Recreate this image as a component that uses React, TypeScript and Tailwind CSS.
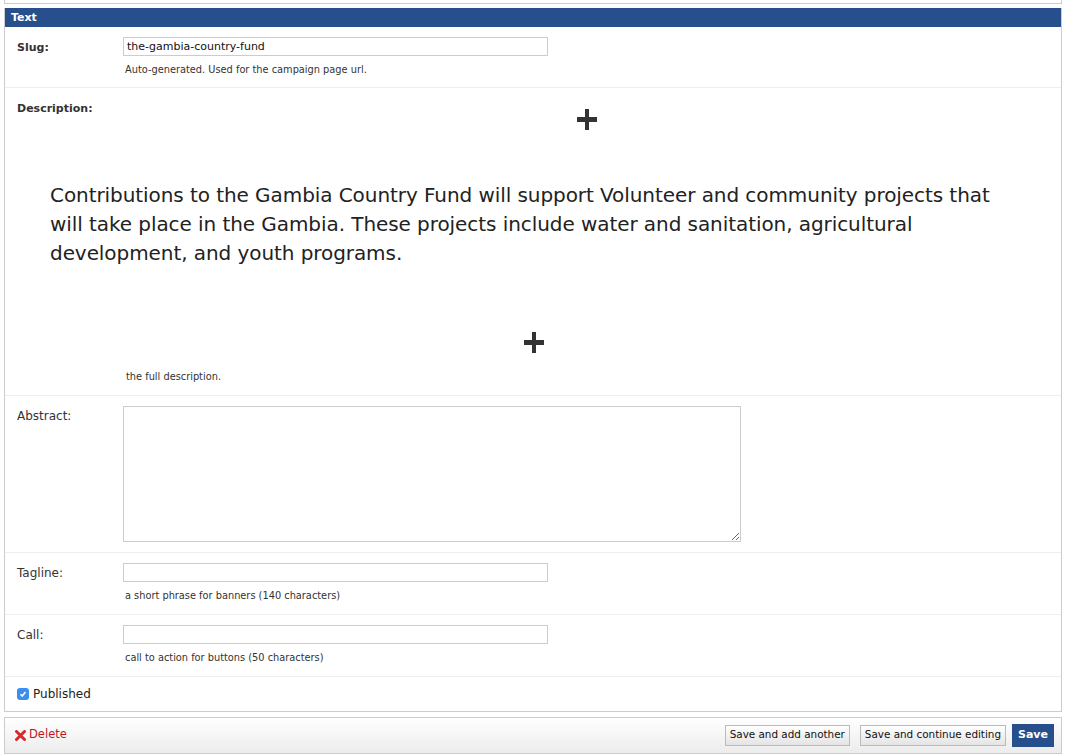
import React from 'react';

const font = { fontFamily: '"DejaVu Sans", Verdana, sans-serif' };

function Plus() {
  return (
    <svg width="20" height="21" viewBox="0 0 20 21" className="block">
      <rect x="8" y="0" width="4" height="21" fill="#333" />
      <rect x="0" y="8" width="20" height="5" fill="#333" />
    </svg>
  );
}

function Row({
  label,
  bold,
  children,
}: {
  label: string;
  bold?: boolean;
  children: React.ReactNode;
}) {
  return (
    <div className={`flex border-b border-[#eee] pl-[12px] pt-[10px] ${bold ? 'pb-[11px]' : 'pb-[12px]'}`}>
      <div
        className={`w-[106px] shrink-0 text-[#333] ${bold ? 'pt-[3px] text-[11px] font-bold' : 'pt-[1px] text-[12px]'}`}
      >
        {label}
      </div>
      <div className="flex-1">{children}</div>
    </div>
  );
}

function Help({ children }: { children: React.ReactNode }) {
  return <p className="mt-[8px] pl-[2px] text-[9.8px] leading-[12px] text-[#333]">{children}</p>;
}

const inputClass =
  'block h-[19px] w-[425px] border border-[#ccc] bg-white px-[3px] text-[11px] text-[#111] outline-none';

const btnClass =
  'h-[21px] border border-[#bbb] bg-gradient-to-b from-white to-[#e4e4e4] px-[4px] text-[10.4px] text-[#111]';

export default function App() {
  return (
    <div className="min-h-[754px] w-[1069px] bg-white" style={font}>
      {/* tail of the previous fieldset */}
      <div className="ml-[4px] mr-[7px] h-[4px] border-x border-b border-[#ccc]" />

      {/* Text fieldset */}
      <div className="ml-[4px] mr-[7px] mt-[4px] border border-t-0 border-[#ccc]">
        <div className="h-[19px] bg-[#264f8b] pl-[6px] text-[11px] font-bold leading-[19px] text-white">
          Text
        </div>

        <Row label="Slug:" bold>
          <input className={inputClass} defaultValue="the-gambia-country-fund" />
          <Help>Auto-generated. Used for the campaign page url.</Help>
        </Row>

        {/* Description */}
        <div className="border-b border-[#eee] pb-[12px] pt-[13px]">
          <div className="pl-[12px] text-[11px] font-bold text-[#333]">Description:</div>
          <div className="-mt-[9px] pl-[572px]">
            <Plus />
          </div>
          <div className="mt-[51px] pl-[45px] text-[20px] leading-[29px] tracking-[-0.07px] text-[#222]">
            Contributions to the Gambia Country Fund will support Volunteer and community projects that
            <br />
            will take place in the Gambia. These projects include water and sanitation, agricultural
            <br />
            development, and youth programs.
          </div>
          <div className="mt-[64px] pl-[519px]">
            <Plus />
          </div>
          <p className="mt-[18px] pl-[121px] text-[9.8px] leading-[12px] text-[#333]">the full description.</p>
        </div>

        {/* Abstract */}
        <div className="flex border-b border-[#eee] pl-[12px] pt-[10px] pb-[10px]">
          <div className="w-[106px] shrink-0 pt-[1px] text-[12px] text-[#333]">Abstract:</div>
          <textarea className="block h-[136px] w-[618px] border border-[#ccc] bg-white outline-none" />
        </div>

        <Row label="Tagline:">
          <input className={inputClass} />
          <Help>a short phrase for banners (140 characters)</Help>
        </Row>

        <Row label="Call:">
          <input className={inputClass} />
          <Help>call to action for buttons (50 characters)</Help>
        </Row>

        {/* Published */}
        <div className="flex items-center gap-[4px] pl-[12px] pt-[8px] pb-[8px]">
          <span className="flex h-[12px] w-[12px] items-center justify-center rounded-[3px] bg-[#3a8ef0]">
            <svg width="8" height="8" viewBox="0 0 8 8">
              <path d="M1.5 4.2 L3.2 6 L6.5 2" stroke="white" strokeWidth="1.5" fill="none" />
            </svg>
          </span>
          <span className="text-[12px] text-[#222]">Published</span>
        </div>
      </div>

      {/* Submit row */}
      <div className="ml-[4px] mr-[7px] mt-[5px] flex h-[37px] items-center justify-between border border-[#ccc] bg-gradient-to-b from-white to-[#ececec] pl-[10px] pr-[7px]">
        <a className="flex items-center gap-[3px] text-[11.5px] text-[#c4161c]" href="#">
          <svg width="11" height="11" viewBox="0 0 11 11">
            <path d="M1.5 1.5 L9.5 9.5 M9.5 1.5 L1.5 9.5" stroke="#d52a2a" strokeWidth="3" strokeLinecap="round" />
          </svg>
          Delete
        </a>
        <div className="flex items-center">
          <button className={btnClass}>Save and add another</button>
          <button className={`${btnClass} ml-[10px]`}>Save and continue editing</button>
          <button className="ml-[6px] h-[23px] bg-[#264f8b] px-[6px] text-[11px] font-bold text-white">Save</button>
        </div>
      </div>
    </div>
  );
}
